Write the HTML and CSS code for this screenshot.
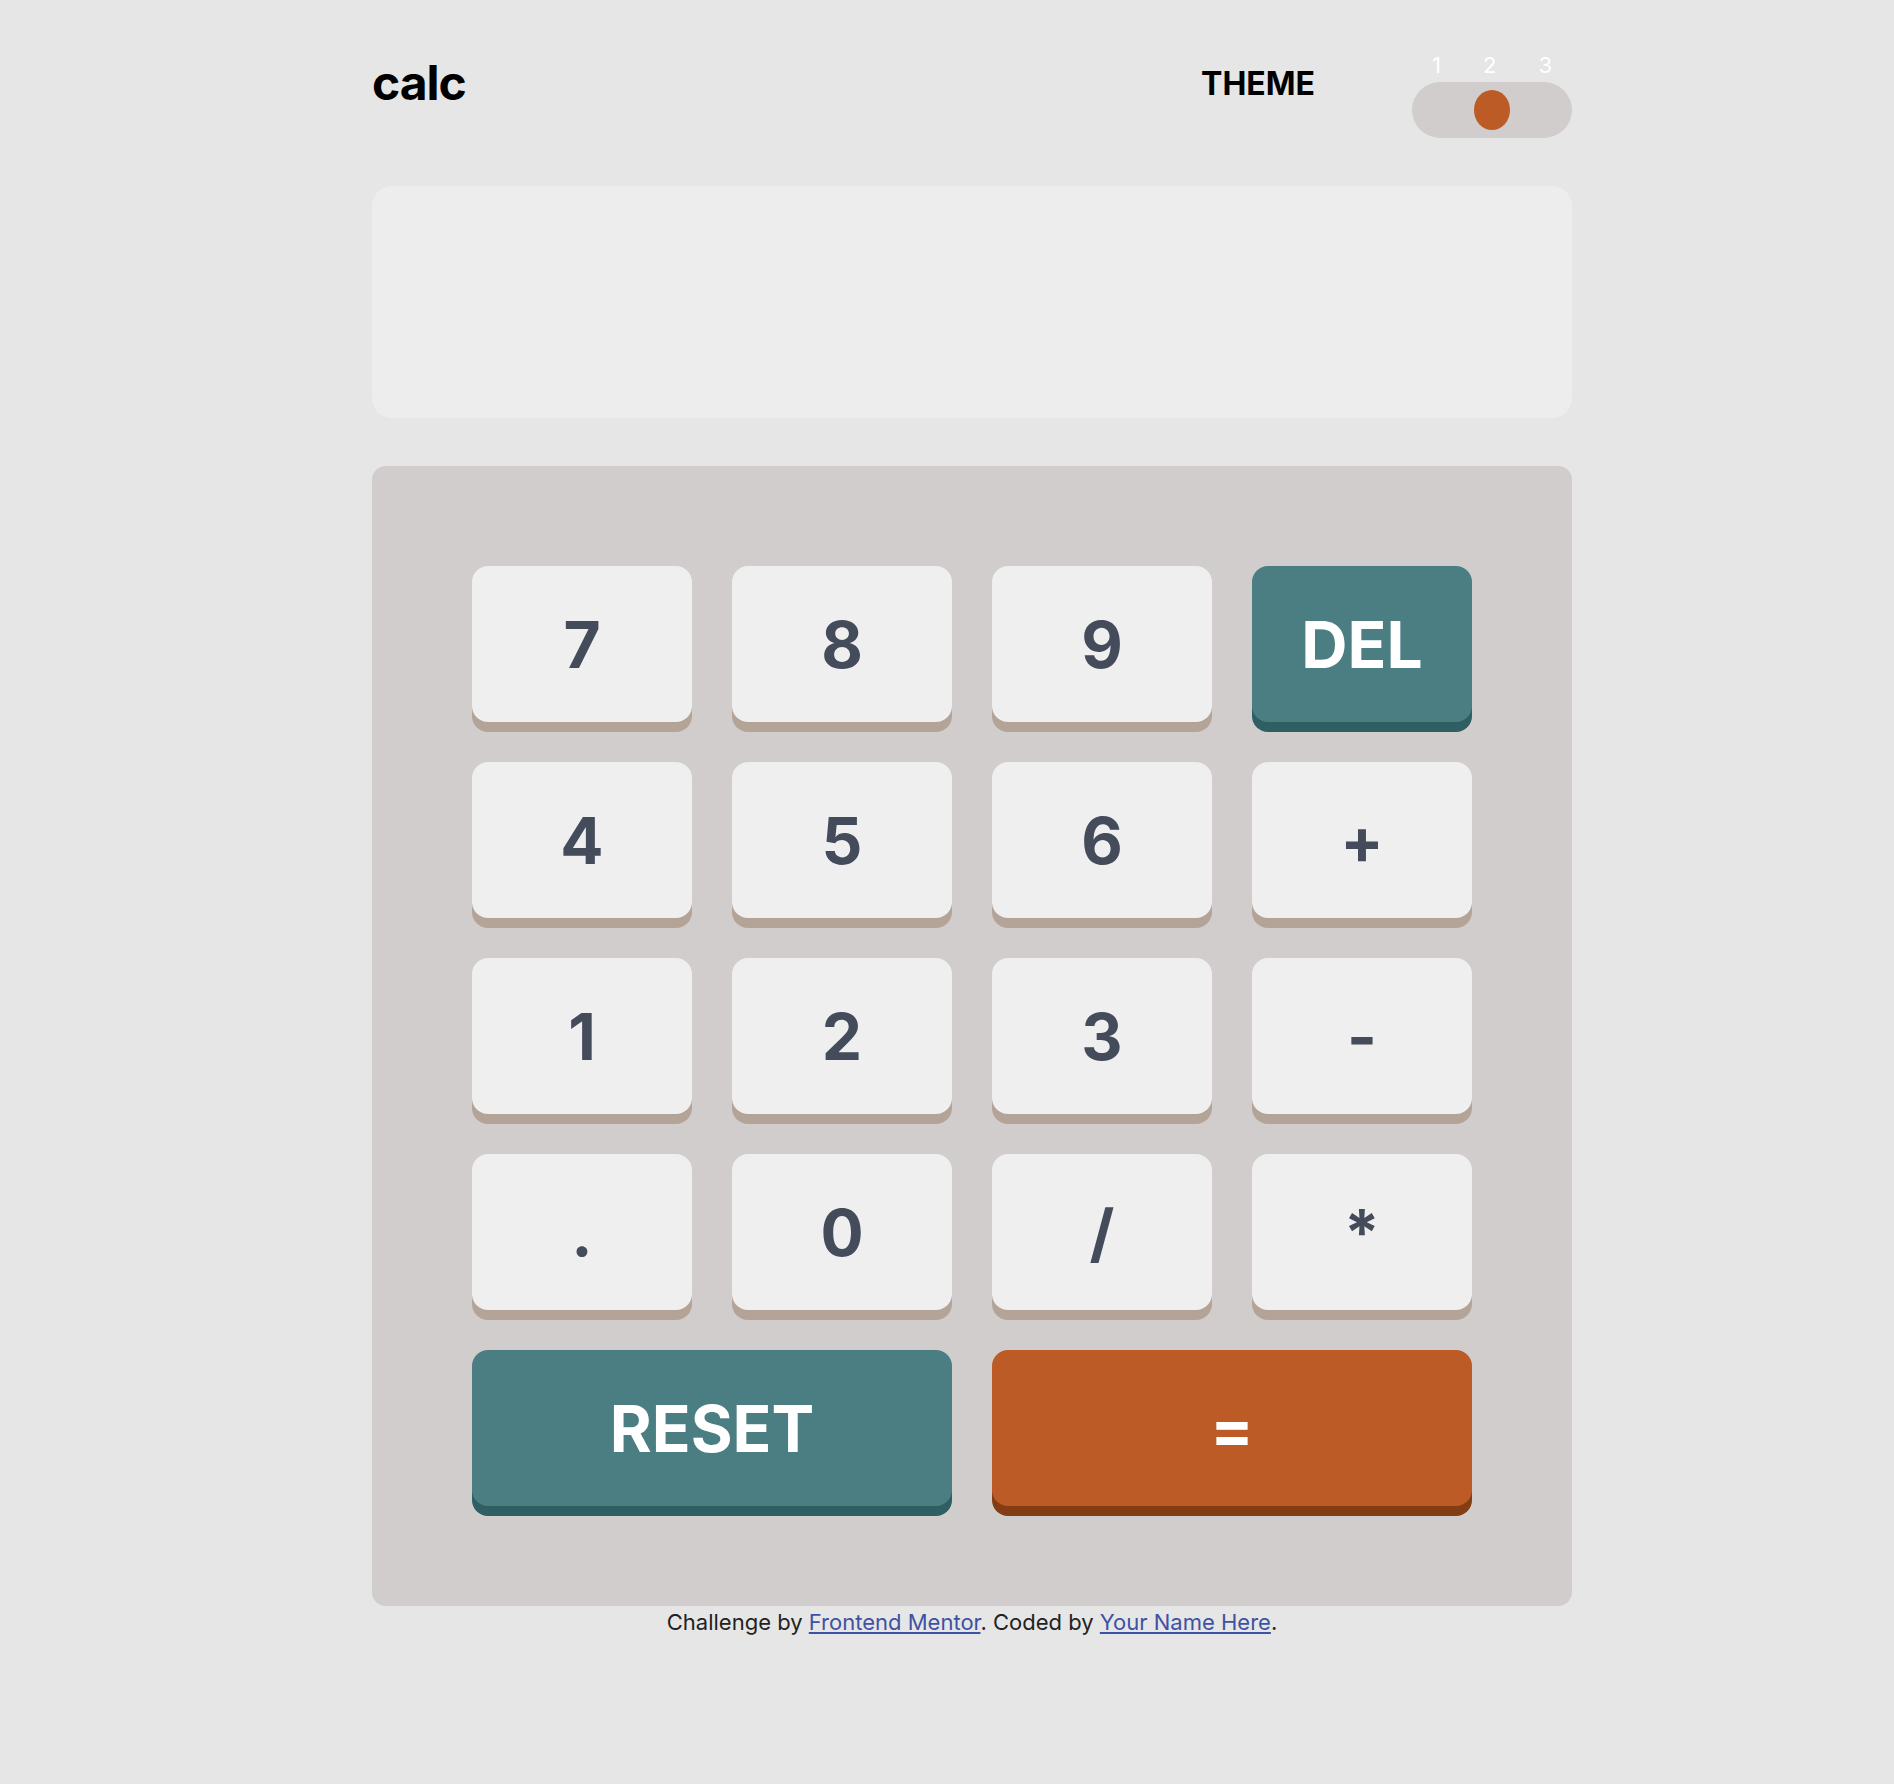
FILE: index.html
```html
<!DOCTYPE html>
<html lang="en">
<head>
<meta charset="utf-8">
<title>Calculator</title>
<link rel="stylesheet" href="styles.css">
</head>
<body>
<main class="calc">
  <header class="top">
    <h1 class="logo">calc</h1>
    <div class="theme">
      <span class="theme-label">THEME</span>
      <div class="switch">
        <div class="switch-nums"><span>1</span><span>2</span><span>3</span></div>
        <div class="switch-track"><span class="switch-knob"></span></div>
      </div>
    </div>
  </header>
  <section class="screen"></section>
  <section class="keypad">
    <button class="key">7</button>
    <button class="key">8</button>
    <button class="key">9</button>
    <button class="key key-teal">DEL</button>
    <button class="key">4</button>
    <button class="key">5</button>
    <button class="key">6</button>
    <button class="key">+</button>
    <button class="key">1</button>
    <button class="key">2</button>
    <button class="key">3</button>
    <button class="key">-</button>
    <button class="key">.</button>
    <button class="key">0</button>
    <button class="key">/</button>
    <button class="key">*</button>
    <button class="key key-teal key-wide">RESET</button>
    <button class="key key-orange key-wide">=</button>
  </section>
  <footer class="attribution">
    Challenge by <a href="#">Frontend Mentor</a>. Coded by <a href="#">Your Name Here</a>.
  </footer>
</main>
</body>
</html>
```
FILE: styles.css
```css
* { box-sizing: border-box; }

body {
  margin: 0;
  background: #e6e6e6;
  font-family: Inter, "Noto Sans", sans-serif;
  color: #000;
}

.calc {
  width: 1200px;
  margin-left: 372px;
  padding-top: 54px;
}

.top {
  display: flex;
  justify-content: space-between;
  align-items: flex-start;
}

.logo {
  margin: 5px 0 0 0;
  font-size: 48px;
  line-height: 48px;
  font-weight: 700;
  letter-spacing: -1px;
}

.theme {
  display: flex;
  align-items: flex-start;
}

.theme-label {
  margin-top: 14px;
  margin-right: 97px;
  font-size: 32px;
  line-height: 32px;
  font-weight: 700;
}

.switch {
  width: 160px;
}

.switch-nums {
  display: flex;
  justify-content: space-between;
  padding: 0 20px;
  font-size: 22px;
  line-height: 22px;
  color: #fff;
  margin-bottom: 6px;
}

.switch-track {
  height: 56px;
  border-radius: 28px;
  background: #d2cdcd;
  display: flex;
  align-items: center;
  justify-content: center;
}

.switch-knob {
  width: 36px;
  height: 40px;
  border-radius: 50%;
  background: #bc5b25;
}

.screen {
  margin-top: 48px;
  height: 232px;
  border-radius: 20px;
  background: #ededed;
}

.keypad {
  margin-top: 48px;
  padding: 100px;
  border-radius: 14px;
  background: #d1cdcc;
  display: grid;
  grid-template-columns: repeat(4, 220px);
  grid-auto-rows: 156px;
  gap: 40px;
}

.key {
  border: 0;
  border-radius: 16px;
  background: #efefef;
  box-shadow: 0 10px 0 #b3a497;
  font-family: Inter, "Noto Sans", sans-serif;
  font-size: 64px;
  font-weight: 700;
  color: #444b5a;
  padding: 0;
  display: flex;
  align-items: center;
  justify-content: center;
}

.key-teal {
  background: #4a7e83;
  box-shadow: 0 10px 0 #2f5e63;
  color: #fff;
}

.key-orange {
  background: #bc5b25;
  box-shadow: 0 10px 0 #823d15;
  color: #fff;
}

.key-wide {
  grid-column: span 2;
}

.attribution {
  margin-top: 3px;
  text-align: center;
  font-size: 22px;
  color: #222;
}

.attribution a {
  color: #3e52a3;
}
```
